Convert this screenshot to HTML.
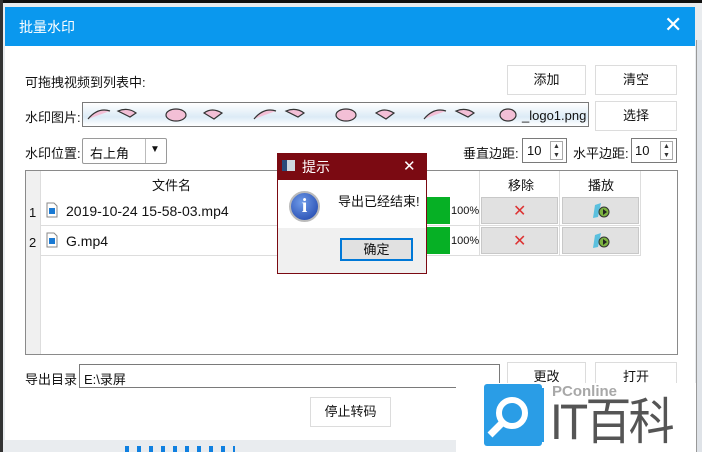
<!DOCTYPE html>
<html><head><meta charset="utf-8"><style>
*{margin:0;padding:0;box-sizing:border-box}
body{width:702px;height:452px;overflow:hidden;background:#e9ecef;font-family:"Liberation Sans","Noto Sans CJK SC",sans-serif;font-size:13px;color:#111;position:relative}
.a{position:absolute}
.btn{position:absolute;background:#fff;border:1px solid #dcdcdc;text-align:center;font-size:13px}
.inp{position:absolute;background:#fff;border:1px solid #7a7a7a}
.gb{position:absolute;background:#e1e1e1;border:1px solid #c8c8c8}
</style></head><body>
<div class="a" style="left:0;top:0;width:702px;height:3px;background:#111"></div>
<div class="a" style="left:0;top:0;width:3px;height:452px;background:#333"></div>
<div class="a" style="left:5px;top:7px;width:690px;height:39px;background:#0a98ee"></div>
<div class="a" style="left:19px;top:17px;color:#fff;font-size:14px">批量水印</div>
<div class="a" style="left:664px;top:13px;color:#fff;font-size:22px;font-family:'DejaVu Sans',sans-serif">✕</div>
<div class="a" style="left:5px;top:46px;width:690px;height:394px;background:#fff"></div>
<div class="a" style="left:697px;top:40px;width:5px;height:412px;background:#dfe3e8"></div>
<div class="a" style="left:696px;top:40px;width:1px;height:412px;background:#999"></div>

<div class="a" style="left:25px;top:72px">可拖拽视频到列表中:</div>
<div class="btn" style="left:507px;top:65px;width:79px;height:30px;line-height:28px">添加</div>
<div class="btn" style="left:595px;top:65px;width:82px;height:30px;line-height:28px">清空</div>

<div class="a" style="left:25px;top:107px">水印图片:</div>
<div class="inp" style="left:82px;top:102px;width:507px;height:25px;background:linear-gradient(#fff,#dcebf6 60%,#fff)"></div>
<svg class="a" style="left:86px;top:105px" width="432" height="20">
<g fill="#f3bfd6" stroke="#333" stroke-width="1.2">
<path d="M2 14q10-12 22-8"/><path d="M32 6q10 -4 18 2l-6 4z"/><ellipse cx="90" cy="10" rx="10" ry="6"/><path d="M118 8q8-6 18 0l-8 6z"/><path d="M168 14q10-12 22-8"/><path d="M200 6q10 -4 18 2l-6 4z"/><ellipse cx="260" cy="10" rx="10" ry="6"/><path d="M290 8q8-6 18 0l-8 6z"/><path d="M338 14q10-12 22-8"/><path d="M370 6q10 -4 18 2l-6 4z"/><ellipse cx="422" cy="10" rx="8" ry="6"/></g></svg>
<div class="a" style="left:522px;top:108px;font-size:13px">_logo1.png</div>
<div class="btn" style="left:595px;top:101px;width:82px;height:30px;line-height:28px">选择</div>

<div class="a" style="left:25px;top:143px">水印位置:</div>
<div class="a" style="left:82px;top:138px;width:85px;height:26px;border:1px solid #9a9a9a;border-radius:2px;background:#fff"></div>
<div class="a" style="left:90px;top:143px">右上角</div>
<div class="a" style="left:145px;top:139px;width:1px;height:24px;background:#bbb"></div>
<div class="a" style="left:150px;top:144px;font-size:10px">▼</div>
<div class="a" style="left:463px;top:143px">垂直边距:</div>
<div class="inp" style="left:522px;top:138px;width:45px;height:25px"></div>
<div class="a" style="left:527px;top:143px">10</div>
<div class="a" style="left:550px;top:141px;width:13px;height:19px;border:1px solid #aaa;font-size:7px;line-height:9px;text-align:center;color:#333">▲<br>▼</div>
<div class="a" style="left:573px;top:143px">水平边距:</div>
<div class="inp" style="left:631px;top:138px;width:46px;height:25px"></div>
<div class="a" style="left:635px;top:143px">10</div>
<div class="a" style="left:660px;top:141px;width:13px;height:19px;border:1px solid #aaa;font-size:7px;line-height:9px;text-align:center;color:#333">▲<br>▼</div>

<div class="a" style="left:25px;top:170px;width:653px;height:185px;border:1px solid #8a8a8a;background:#fff"></div>
<div class="a" style="left:26px;top:171px;width:14px;height:183px;background:#f0f0f0"></div>
<div class="a" style="left:40px;top:171px;width:1px;height:183px;background:#ddd"></div>
<div class="a" style="left:152px;top:175px">文件名</div>
<div class="a" style="left:508px;top:175px">移除</div>
<div class="a" style="left:588px;top:175px">播放</div>
<div class="a" style="left:479px;top:171px;width:1px;height:85px;background:#ddd"></div>
<div class="a" style="left:559px;top:171px;width:1px;height:85px;background:#ddd"></div>
<div class="a" style="left:640px;top:171px;width:1px;height:85px;background:#ddd"></div>
<div class="a" style="left:40px;top:225px;width:600px;height:1px;background:#ddd"></div>
<div class="a" style="left:40px;top:255px;width:600px;height:1px;background:#ddd"></div>
<div class="a" style="left:29px;top:205px">1</div>
<div class="a" style="left:29px;top:235px">2</div>
<svg class="a" style="left:46px;top:202px" width="12" height="16"><path d="M1 1h7l3 3v11H1z" fill="#fff" stroke="#888"/><rect x="3" y="6" width="6" height="6" fill="#1a7ad4"/></svg>
<svg class="a" style="left:46px;top:232px" width="12" height="16"><path d="M1 1h7l3 3v11H1z" fill="#fff" stroke="#888"/><rect x="3" y="6" width="6" height="6" fill="#1a7ad4"/></svg>
<div class="a" style="left:66px;top:203px;font-size:14px">2019-10-24 15-58-03.mp4</div>
<div class="a" style="left:66px;top:233px;font-size:14px">G.mp4</div>
<div class="a" style="left:424px;top:197px;width:26px;height:27px;background:#06b025"></div>
<div class="a" style="left:424px;top:227px;width:26px;height:27px;background:#06b025"></div>
<div class="a" style="left:451px;top:205px;font-size:11px">100%</div>
<div class="a" style="left:451px;top:235px;font-size:11px">100%</div>
<div class="gb" style="left:481px;top:197px;width:77px;height:27px"></div>
<div class="gb" style="left:562px;top:197px;width:77px;height:27px"></div>
<div class="gb" style="left:481px;top:227px;width:77px;height:27px"></div>
<div class="gb" style="left:562px;top:227px;width:77px;height:27px"></div>
<div class="a" style="left:513px;top:201px;color:#d33;font-size:16px;font-family:'DejaVu Sans'">✕</div>
<div class="a" style="left:513px;top:231px;color:#d33;font-size:16px;font-family:'DejaVu Sans'">✕</div>
<svg class="a" style="left:591px;top:202px" width="20" height="18"><path d="M4 3l6-2-3 14-5 1z" fill="#5bc0de"/><circle cx="13" cy="10" r="5" fill="#7cb342" stroke="#333"/><path d="M12 7v6l4-3z" fill="#222"/></svg>
<svg class="a" style="left:591px;top:232px" width="20" height="18"><path d="M4 3l6-2-3 14-5 1z" fill="#5bc0de"/><circle cx="13" cy="10" r="5" fill="#7cb342" stroke="#333"/><path d="M12 7v6l4-3z" fill="#222"/></svg>

<div class="a" style="left:277px;top:153px;width:150px;height:121px;border:1px solid #7b0a12;background:#f0f0f0"></div>
<div class="a" style="left:277px;top:153px;width:150px;height:27px;background:#7b0a12"></div>
<div class="a" style="left:282px;top:160px;width:13px;height:11px;background:linear-gradient(90deg,#2a4a7a 40%,#cfd8e0 40%)"></div>
<div class="a" style="left:302px;top:157px;color:#fff;font-size:14px">提示</div>
<div class="a" style="left:403px;top:157px;color:#fff;font-size:15px;font-family:'DejaVu Sans'">✕</div>
<div class="a" style="left:278px;top:180px;width:148px;height:48px;background:#fff"></div>
<div class="a" style="left:289px;top:191px;width:31px;height:31px;border-radius:50%;background:radial-gradient(circle at 40% 35%,#6f9be8,#1a3fa8);border:2px solid #bbb;color:#fff;font:bold 20px 'Liberation Serif';text-align:center;line-height:27px">i</div>
<div class="a" style="left:338px;top:191px">导出已经结束!</div>
<div class="a" style="left:340px;top:238px;width:73px;height:23px;border:2px solid #0078d7;background:#e1e1e1;text-align:center;line-height:19px">确定</div>

<div class="a" style="left:25px;top:369px">导出目录</div>
<div class="inp" style="left:79px;top:364px;width:421px;height:24px"></div>
<div class="a" style="left:84px;top:369px">E:\录屏</div>
<div class="btn" style="left:507px;top:362px;width:79px;height:30px;line-height:28px">更改</div>
<div class="btn" style="left:595px;top:362px;width:82px;height:30px;line-height:28px">打开</div>
<div class="btn" style="left:310px;top:397px;width:81px;height:30px;line-height:28px">停止转码</div>

<div class="a" style="left:456px;top:383px;width:240px;height:69px;background:#fff"></div>
<div class="a" style="left:484px;top:384px;width:58px;height:62px;background:#2a9de6;border-radius:3px"></div>
<div class="a" style="left:541px;top:388px;width:3px;height:54px;background:#2a9de6"></div>
<svg class="a" style="left:484px;top:384px" width="58" height="62"><circle cx="28" cy="29" r="13" fill="none" stroke="#fff" stroke-width="6"/><path d="M18 39l-12 12" stroke="#fff" stroke-width="7"/></svg>
<div class="a" style="left:552px;top:383px;color:#a8a8a8;font:bold 15px 'Liberation Sans',sans-serif">PConline</div>
<div class="a" style="left:550px;top:396px;color:#555;font-size:50px;line-height:52px;letter-spacing:-3px;transform:scaleX(0.92);transform-origin:left top">IT百科</div>
<div class="a" style="left:125px;top:446px;width:110px;height:6px;background:repeating-linear-gradient(90deg,#1080e0 0 4px,transparent 4px 12px)"></div>
</body></html>
